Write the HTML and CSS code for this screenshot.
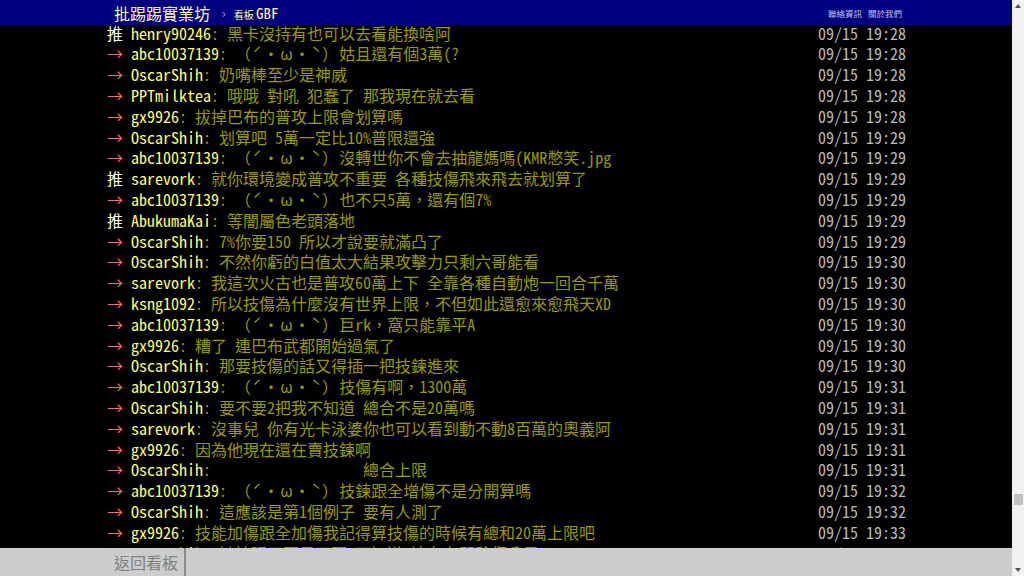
FILE: index.html
```html
<!DOCTYPE html>
<html lang="zh-Hant-TW">
<head>
    <meta charset="UTF-8">
    <meta name="viewport" content="width=device-width, initial-scale=1.0">
    <title>[討論] 巴布的普攻上限 - 看板 GBF - 批踢踢實業坊</title>
    <link rel="stylesheet" href="styles.css">
</head>
<body>
    <div class="page">
        <div id="topbar-container">
            <div id="topbar" class="bbs-content">
                <a id="logo" href="#">批踢踢實業坊</a>
                <span class="crumb">›</span>
                <a class="board" href="#"><span class="board-label">看板 </span>GBF</a>
                <div class="right">
                    <a href="#">聯絡資訊</a>
                    <a href="#">關於我們</a>
                </div>
            </div>
        </div>

        <div id="main-container">
            <div id="main-content" class="bbs-screen bbs-content">
                <div class="push"><span class="hl push-tag">推 </span><span class="f3 hl push-userid">henry90246</span><span class="f3 push-content">: 黑卡沒持有也可以去看能換啥阿</span><span class="push-ipdatetime"> 09/15 19:28</span></div>
                <div class="push"><span class="f1 hl push-tag">→ </span><span class="f3 hl push-userid">abc10037139</span><span class="f3 push-content">: <span class="kao">（ˊ・ω・ˋ）</span>姑且還有個3萬(?</span><span class="push-ipdatetime"> 09/15 19:28</span></div>
                <div class="push"><span class="f1 hl push-tag">→ </span><span class="f3 hl push-userid">OscarShih</span><span class="f3 push-content">: 奶嘴棒至少是神威</span><span class="push-ipdatetime"> 09/15 19:28</span></div>
                <div class="push"><span class="f1 hl push-tag">→ </span><span class="f3 hl push-userid">PPTmilktea</span><span class="f3 push-content">: 哦哦 對吼 犯蠢了 那我現在就去看</span><span class="push-ipdatetime"> 09/15 19:28</span></div>
                <div class="push"><span class="f1 hl push-tag">→ </span><span class="f3 hl push-userid">gx9926</span><span class="f3 push-content">: 拔掉巴布的普攻上限會划算嗎</span><span class="push-ipdatetime"> 09/15 19:28</span></div>
                <div class="push"><span class="f1 hl push-tag">→ </span><span class="f3 hl push-userid">OscarShih</span><span class="f3 push-content">: 划算吧 5萬一定比10%普限還強</span><span class="push-ipdatetime"> 09/15 19:29</span></div>
                <div class="push"><span class="f1 hl push-tag">→ </span><span class="f3 hl push-userid">abc10037139</span><span class="f3 push-content">: <span class="kao">（ˊ・ω・ˋ）</span>沒轉世你不會去抽龍媽嗎(KMR憋笑.jpg</span><span class="push-ipdatetime"> 09/15 19:29</span></div>
                <div class="push"><span class="hl push-tag">推 </span><span class="f3 hl push-userid">sarevork</span><span class="f3 push-content">: 就你環境變成普攻不重要 各種技傷飛來飛去就划算了</span><span class="push-ipdatetime"> 09/15 19:29</span></div>
                <div class="push"><span class="f1 hl push-tag">→ </span><span class="f3 hl push-userid">abc10037139</span><span class="f3 push-content">: <span class="kao">（ˊ・ω・ˋ）</span>也不只5萬，還有個7%</span><span class="push-ipdatetime"> 09/15 19:29</span></div>
                <div class="push"><span class="hl push-tag">推 </span><span class="f3 hl push-userid">AbukumaKai</span><span class="f3 push-content">: 等闇屬色老頭落地</span><span class="push-ipdatetime"> 09/15 19:29</span></div>
                <div class="push"><span class="f1 hl push-tag">→ </span><span class="f3 hl push-userid">OscarShih</span><span class="f3 push-content">: 7%你要150 所以才說要就滿凸了</span><span class="push-ipdatetime"> 09/15 19:29</span></div>
                <div class="push"><span class="f1 hl push-tag">→ </span><span class="f3 hl push-userid">OscarShih</span><span class="f3 push-content">: 不然你虧的白值太大結果攻擊力只剩六哥能看</span><span class="push-ipdatetime"> 09/15 19:30</span></div>
                <div class="push"><span class="f1 hl push-tag">→ </span><span class="f3 hl push-userid">sarevork</span><span class="f3 push-content">: 我這次火古也是普攻60萬上下 全靠各種自動炮一回合千萬</span><span class="push-ipdatetime"> 09/15 19:30</span></div>
                <div class="push"><span class="f1 hl push-tag">→ </span><span class="f3 hl push-userid">ksng1092</span><span class="f3 push-content">: 所以技傷為什麼沒有世界上限，不但如此還愈來愈飛天XD</span><span class="push-ipdatetime"> 09/15 19:30</span></div>
                <div class="push"><span class="f1 hl push-tag">→ </span><span class="f3 hl push-userid">abc10037139</span><span class="f3 push-content">: <span class="kao">（ˊ・ω・ˋ）</span>巨rk，窩只能靠平A</span><span class="push-ipdatetime"> 09/15 19:30</span></div>
                <div class="push"><span class="f1 hl push-tag">→ </span><span class="f3 hl push-userid">gx9926</span><span class="f3 push-content">: 糟了 連巴布武都開始過氣了</span><span class="push-ipdatetime"> 09/15 19:30</span></div>
                <div class="push"><span class="f1 hl push-tag">→ </span><span class="f3 hl push-userid">OscarShih</span><span class="f3 push-content">: 那要技傷的話又得插一把技鍊進來</span><span class="push-ipdatetime"> 09/15 19:30</span></div>
                <div class="push"><span class="f1 hl push-tag">→ </span><span class="f3 hl push-userid">abc10037139</span><span class="f3 push-content">: <span class="kao">（ˊ・ω・ˋ）</span>技傷有啊，1300萬</span><span class="push-ipdatetime"> 09/15 19:31</span></div>
                <div class="push"><span class="f1 hl push-tag">→ </span><span class="f3 hl push-userid">OscarShih</span><span class="f3 push-content">: 要不要2把我不知道 總合不是20萬嗎</span><span class="push-ipdatetime"> 09/15 19:31</span></div>
                <div class="push"><span class="f1 hl push-tag">→ </span><span class="f3 hl push-userid">sarevork</span><span class="f3 push-content">: 沒事兒 你有光卡泳婆你也可以看到動不動8百萬的奧義阿</span><span class="push-ipdatetime"> 09/15 19:31</span></div>
                <div class="push"><span class="f1 hl push-tag">→ </span><span class="f3 hl push-userid">gx9926</span><span class="f3 push-content">: 因為他現在還在賣技鍊啊</span><span class="push-ipdatetime"> 09/15 19:31</span></div>
                <div class="push"><span class="f1 hl push-tag">→ </span><span class="f3 hl push-userid">OscarShih</span><span class="f3 push-content">:                   總合上限</span><span class="push-ipdatetime"> 09/15 19:31</span></div>
                <div class="push"><span class="f1 hl push-tag">→ </span><span class="f3 hl push-userid">abc10037139</span><span class="f3 push-content">: <span class="kao">（ˊ・ω・ˋ）</span>技鍊跟全增傷不是分開算嗎</span><span class="push-ipdatetime"> 09/15 19:32</span></div>
                <div class="push"><span class="f1 hl push-tag">→ </span><span class="f3 hl push-userid">OscarShih</span><span class="f3 push-content">: 這應該是第1個例子 要有人測了</span><span class="push-ipdatetime"> 09/15 19:32</span></div>
                <div class="push"><span class="f1 hl push-tag">→ </span><span class="f3 hl push-userid">gx9926</span><span class="f3 push-content">: 技能加傷跟全加傷我記得算技傷的時候有總和20萬上限吧</span><span class="push-ipdatetime"> 09/15 19:33</span></div>
                <div class="push"><span class="f1 hl push-tag">→ </span><span class="f3 hl push-userid">OscarShih</span><span class="f3 push-content">: 她誇張不要是不要 不知道 這有在問驗傷公子</span><span class="push-ipdatetime"> 09/15 19:34</span></div>
            </div>
        </div>

        <div id="navigation-container">
            <div id="navigation" class="bbs-content">
                <a class="board" href="#">返回看板</a>
                <div class="bar"></div>
            </div>
        </div>
    </div>

    <div class="scrollbar">
        <div class="scroll-arrow up"></div>
        <div class="scroll-track">
            <div class="scroll-thumb"></div>
        </div>
        <div class="scroll-arrow down"></div>
    </div>
</body>
</html>
```

FILE: styles.css
```css
html, body {
    height: 100%;
}
body {
    margin: 0;
    padding: 0;
    display: flex;
    overflow: hidden;
    background-color: #000;
    font-family: "Noto Sans Mono CJK TC", "Noto Sans CJK TC", monospace;
}
a {
    text-decoration: none;
}
.page {
    flex: 1;
    min-width: 0;
    display: flex;
    flex-direction: column;
}
.bbs-content {
    width: 800px;
    margin: 0 auto;
    box-sizing: border-box;
}

/* top bar */
#topbar-container {
    height: 25px;
    background-color: #000080;
    flex-shrink: 0;
}
#topbar {
    height: 100%;
    display: flex;
    align-items: center;
    padding-left: 8px;
    padding-right: 4px;
}
#logo {
    color: #ffffa8;
    font-family: "Noto Sans CJK TC", sans-serif;
    font-size: 16px;
    line-height: 1;
}
.crumb {
    color: #bbb;
    font-size: 12px;
    margin: 0 8px 0 12px;
}
.board {
    color: #ffffa8;
    font-size: 15px;
    line-height: 1;
}
.board-label {
    font-size: 10px;
    font-family: "Noto Sans CJK TC", sans-serif;
}
.right {
    margin-left: auto;
    display: flex;
    gap: 6px;
}
.right a {
    color: #c6c6e6;
    font-family: "Noto Sans CJK TC", sans-serif;
    font-size: 8.5px;
}

/* pushes */
#main-container {
    flex: 1;
    overflow: hidden;
}
.bbs-screen {
    margin-top: -2.4px;
    padding-left: 1px;
    font-size: 16px;
    line-height: 20.8px;
    color: #bbb;
}
.push {
    display: flex;
    white-space: pre;
}
.push-ipdatetime {
    margin-left: auto;
    color: #bbb;
}
.kao {
    letter-spacing: 1.2px;
}
.hl { color: #fff; }
.f1.hl { color: #f66; }
.f3 { color: #990; }
.f3.hl { color: #ff6; }

/* bottom bar */
#navigation-container {
    height: 28px;
    background-color: #ccc;
    flex-shrink: 0;
}
#navigation {
    height: 100%;
    display: flex;
    align-items: center;
    padding-left: 8px;
}
#navigation .board {
    color: #808080;
    font-family: "Noto Sans CJK TC", sans-serif;
    font-size: 16px;
}
#navigation .bar {
    width: 2px;
    height: 100%;
    margin-left: 6px;
    background-color: #888;
}

/* fake scrollbar */
.scrollbar {
    width: 12px;
    flex-shrink: 0;
    display: flex;
    flex-direction: column;
    background-color: #f1f1f1;
}
.scroll-arrow {
    height: 12px;
    display: flex;
    align-items: center;
    justify-content: center;
}
.scroll-arrow::before {
    content: "";
    border-left: 3px solid transparent;
    border-right: 3px solid transparent;
}
.scroll-arrow.up::before {
    border-bottom: 4px solid #505050;
}
.scroll-arrow.down::before {
    border-top: 4px solid #505050;
}
.scroll-track {
    flex: 1;
    display: flex;
    flex-direction: column;
    padding: 482px 1px 0 2px;
}
.scroll-thumb {
    height: 11px;
    background-color: #c1c1c1;
}
```
